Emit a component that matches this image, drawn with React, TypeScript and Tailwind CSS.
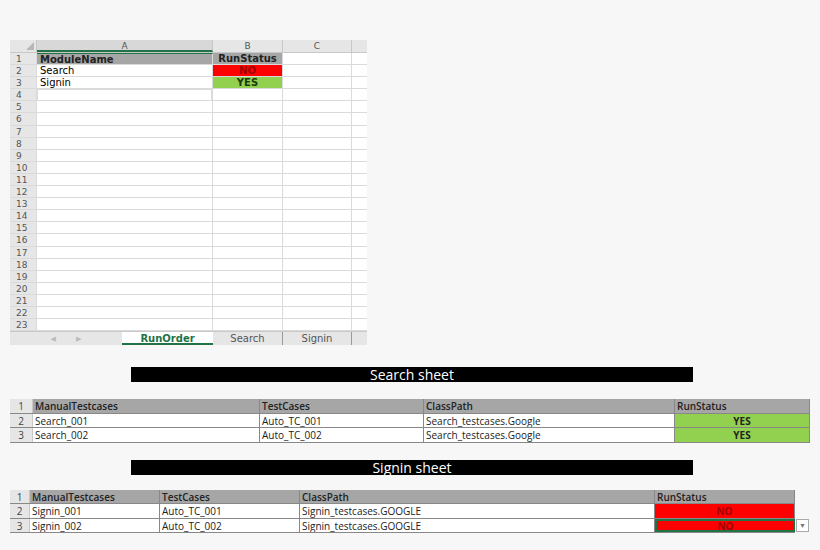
const rows = Array.from({ length: 23 }, (_, i) => i + 1);

function TopGrid() {
  const cell = "border-r border-b border-[#dadada] h-[12.1px] leading-[12px] px-[3px] overflow-hidden whitespace-nowrap";
  return (
    <div className="ml-[10px] w-[357px] text-[10px]" style={{ fontFamily: "'DejaVu Sans', sans-serif" }}>
      <div className="flex h-[13px] bg-[#e6e6e6] text-[#555] text-[9px] leading-[13px] border-b border-[#c8c8c8]">
        <div className="w-[27px] border-r border-[#c8c8c8] relative">
          <span className="absolute right-[2px] bottom-[2px] w-0 h-0 border-l-[8px] border-l-transparent border-b-[8px] border-b-[#b7b7b7]" />
        </div>
        <div className="w-[176px] text-center border-r border-[#c8c8c8] bg-[#d8d8d8] border-b-2 border-b-[#217346]">A</div>
        <div className="w-[70px] text-center border-r border-[#c8c8c8]">B</div>
        <div className="w-[69px] text-center border-r border-[#c8c8c8]">C</div>
        <div className="flex-1" />
      </div>
      {rows.map((r) => (
        <div key={r} className="flex bg-white">
          <div className={`w-[27px] text-[9px] text-[#555] bg-[#e6e6e6] pl-[6px] ${cell} ${r === 4 ? "bg-[#d2d2d2]" : ""}`}>{r}</div>
          <div
            className={`w-[176px] ${cell} ${r === 1 ? "bg-[#a6a6a6] font-bold text-[#222] border-t border-t-[#217346]" : ""} ${r === 4 ? "border border-[#217346] border-r-2" : ""}`}
          >
            {r === 1 ? "ModuleName" : r === 2 ? "Search" : r === 3 ? "Signin" : ""}
          </div>
          <div
            className={`w-[70px] ${cell} font-bold text-center ${r === 1 ? "bg-[#a6a6a6] text-[#222]" : ""} ${r === 2 ? "bg-[#ff0000] text-[#a00000]" : ""} ${r === 3 ? "bg-[#92d050] text-[#1c3a0a]" : ""} ${r <= 3 ? "border-[#555]" : ""}`}
          >
            {r === 1 ? "RunStatus" : r === 2 ? "NO" : r === 3 ? "YES" : ""}
          </div>
          <div className={`w-[69px] ${cell}`} />
          <div className={`flex-1 ${cell} border-r-0`} />
        </div>
      ))}
      <div className="flex h-[14px] bg-[#e6e6e6] text-[10px] leading-[14px] border-t border-[#c8c8c8]">
        <div className="w-[112px] flex justify-center gap-[20px] text-[7px] text-[#bbb]">
          <span>◀</span>
          <span>▶</span>
        </div>
        <div className="w-[91px] bg-white text-center font-bold text-[#217346] border-b-2 border-[#217346]">RunOrder</div>
        <div className="w-[70px] text-center text-[#555] border-r border-[#999]">Search</div>
        <div className="w-[69px] text-center text-[#555] border-r border-[#999]">Signin</div>
      </div>
    </div>
  );
}

function Banner({ title }: { title: string }) {
  return (
    <div className="ml-[131px] w-[562px] h-[15px] bg-black text-white text-center text-[14px] leading-[15px]" style={{ fontFamily: "'Open Sans', sans-serif" }}>
      {title}
    </div>
  );
}

interface SheetProps {
  widths: number[];
  data: string[][];
  status: "YES" | "NO";
  dropdown?: boolean;
}

function Sheet({ widths, data, status, dropdown }: SheetProps) {
  const good = status === "YES";
  return (
    <div className="ml-[10px] text-[10px] flex" style={{ fontFamily: "'Open Sans', sans-serif" }}>
      <div>
        {[["ManualTestcases", "TestCases", "ClassPath", "RunStatus"], ...data].map((row, i) => (
          <div key={i} className={`flex h-[14.5px] leading-[14px] ${i === 0 ? "bg-[#a6a6a6]" : "bg-white"} border-b border-[#888]`}>
            <div className="text-center bg-[#e6e6e6] text-[#444] border-r border-[#c8c8c8]" style={{ width: widths[0] }}>{i + 1}</div>
            {row.map((c, j) => {
              const selected = j === 3 && i === data.length && dropdown;
              return (
                <div
                  key={j}
                  className={`px-[2px] whitespace-nowrap overflow-hidden border-r border-[#888] text-[#222] ${i === 0 ? "font-semibold" : ""} ${j === 3 && i > 0 ? `text-center font-bold ${good ? "bg-[#92d050] text-[#1c3a0a]" : "bg-[#ff0000] text-[#a00000]"}` : ""} ${selected ? "border-2 border-[#217346] leading-[10px]" : ""}`}
                  style={{ width: widths[j + 1] }}
                >
                  {j === 3 && i > 0 ? status : c}
                </div>
              );
            })}
          </div>
        ))}
      </div>
      {dropdown && (
        <div className="self-end mb-[1px] ml-[1px] w-[13px] h-[13px] border border-[#aaa] bg-white text-[7px] text-[#777] text-center leading-[12px]">▼</div>
      )}
    </div>
  );
}

export default function App() {
  return (
    <div className="w-[820px] h-[550px] bg-[#f7f7f7] pt-[40px] overflow-hidden">
      <TopGrid />
      <div className="mt-[22px]">
        <Banner title="Search sheet" />
      </div>
      <div className="mt-[17px]">
        <Sheet
          widths={[23, 227, 164, 251, 135]}
          status="YES"
          data={[
            ["Search_001", "Auto_TC_001", "Search_testcases.Google", ""],
            ["Search_002", "Auto_TC_002", "Search_testcases.Google", ""],
          ]}
        />
      </div>
      <div className="mt-[17px]">
        <Banner title="Signin sheet" />
      </div>
      <div className="mt-[15px]">
        <Sheet
          widths={[20, 130, 140, 355, 140]}
          status="NO"
          dropdown
          data={[
            ["Signin_001", "Auto_TC_001", "Signin_testcases.GOOGLE", ""],
            ["Signin_002", "Auto_TC_002", "Signin_testcases.GOOGLE", ""],
          ]}
        />
      </div>
    </div>
  );
}
